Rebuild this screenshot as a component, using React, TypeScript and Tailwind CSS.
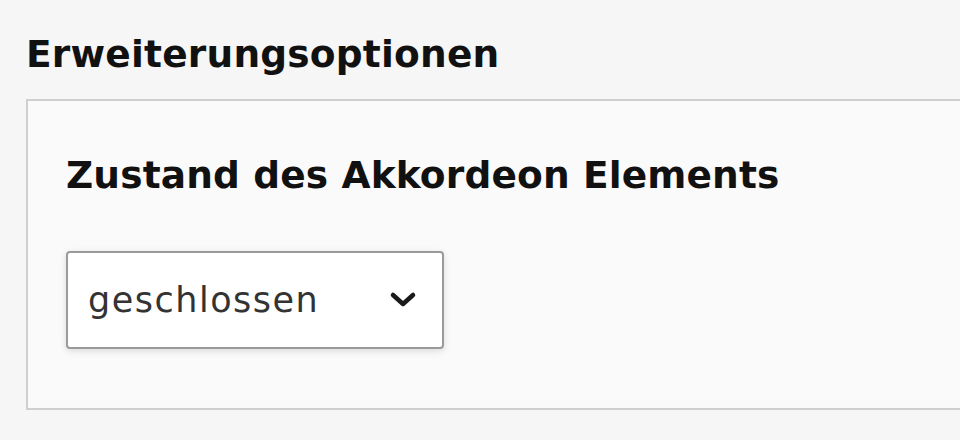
export default function App() {
  return (
    <div className="w-[960px] h-[440px] overflow-hidden bg-[#f6f6f6] pl-[26px] pt-[32px] font-['DejaVu_Sans',Verdana,sans-serif]">
      <h2 className="text-[37.5px] leading-[44px] font-bold text-[#111] tracking-[0.2px]">
        Erweiterungsoptionen
      </h2>
      <div className="mt-[23px] h-[311px] border-2 border-r-0 border-[#cfcfcf] bg-[#fafafa] pl-[38px] pt-[52px]">
        <div className="text-[37.5px] leading-[44px] font-bold text-[#111] tracking-[0.15px]">
          Zustand des Akkordeon Elements
        </div>
        <div className="mt-[54px] w-[378px] h-[98px] flex items-center justify-between rounded-[4px] border-2 border-[#9a9a9a] bg-white pl-[20px] pr-[25px] shadow-[0_2px_7px_rgba(0,0,0,0.13)]">
          <span className="text-[35px] tracking-[1.5px] text-[#333]">geschlossen</span>
          <svg width="28" height="18" viewBox="0 0 28 18" fill="none">
            <path d="M4 4 L14 13 L24 4" stroke="#1a1a1a" strokeWidth="4.5" strokeLinecap="round" strokeLinejoin="round" />
          </svg>
        </div>
      </div>
    </div>
  );
}
